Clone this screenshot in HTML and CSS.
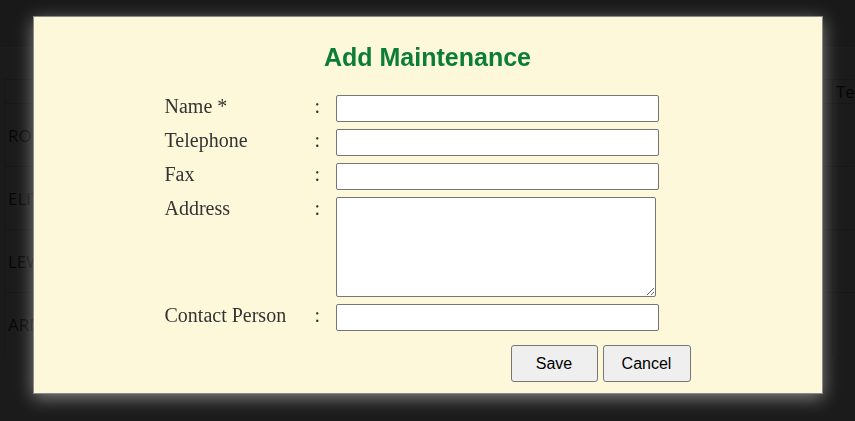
FILE: index.html
```html
<!DOCTYPE html>
<html>
<head>
<meta charset="utf-8">
<link rel="stylesheet" href="styles.css">
</head>
<body>
<div class="page">
  <div class="nav"></div>
  <table class="list">
    <thead>
      <tr><th class="c-name"></th><th class="c-addr"></th><th class="c-tel">Telephone</th></tr>
    </thead>
    <tbody>
      <tr><td>ROBERT SUPPLY</td><td></td><td></td></tr>
      <tr><td>ELITE SERVICE</td><td></td><td></td></tr>
      <tr><td>LEWIS TECH</td><td></td><td></td></tr>
      <tr><td>ARMADA</td><td></td><td></td></tr>
    </tbody>
  </table>
</div>

<div class="overlay">
  <div class="modal">
    <h2 class="title">Add Maintenance</h2>
    <div class="form">
      <div class="grid">
        <label class="lbl">Name *</label><span class="colon">:</span><input class="field" type="text">
        <label class="lbl">Telephone</label><span class="colon">:</span><input class="field" type="text">
        <label class="lbl">Fax</label><span class="colon">:</span><input class="field" type="text">
        <label class="lbl">Address</label><span class="colon">:</span><textarea class="area"></textarea>
        <label class="lbl">Contact Person</label><span class="colon">:</span><input class="field" type="text">
      </div>
      <div class="actions">
        <button class="btn btn-save" type="button">Save</button>
        <button class="btn btn-cancel" type="button">Cancel</button>
      </div>
    </div>
  </div>
</div>
</body>
</html>
```

FILE: styles.css
```css
html, body {
  margin: 0;
  padding: 0;
  background: #ffffff;
  overflow: hidden;
}

.page {
  width: 855px;
  height: 421px;
  overflow: hidden;
  font-family: "Open Sans", "Liberation Sans", sans-serif;
  font-size: 17px;
  color: #3a3a3a;
}

.nav {
  height: 45px;
  background: #e6e6e6;
  border-bottom: 1px solid #cccccc;
  margin-bottom: 33px;
}

.list {
  border-collapse: collapse;
  table-layout: fixed;
  margin-left: 4px;
  width: 851px;
}

.list th,
.list td {
  box-sizing: border-box;
  border-top: 1px solid #d6d6d6;
  border-left: 1px solid #d6d6d6;
  text-align: left;
  font-weight: normal;
  padding: 0 3px;
  white-space: nowrap;
  overflow: hidden;
}

.list th {
  height: 24px;
}

.list td {
  height: 63px;
}

.c-name { width: 300px; }
.c-addr { width: 528px; }
.c-tel { width: 23px; }

.overlay {
  position: fixed;
  inset: 0;
  background: rgba(0, 0, 0, 0.893);
  display: flex;
  justify-content: center;
  align-items: flex-start;
  padding-top: 16px;
}

.modal {
  width: 788px;
  background: #fdf8da;
  border: 1px solid #8a8a8a;
  box-shadow: 0 4px 16px rgba(255, 255, 255, 0.45);
  padding: 27px 0 11px;
  box-sizing: content-box;
}

.title {
  margin: 0;
  text-align: center;
  font-family: "Liberation Sans", Arial, sans-serif;
  font-weight: bold;
  font-size: 25px;
  line-height: 26px;
  color: #0b7d38;
}

.form {
  margin: 25px 0 0 131px;
  width: 526px;
}

.grid {
  display: grid;
  grid-template-columns: 150px 21px 323px;
  row-gap: 7px;
  align-items: start;
}

.lbl,
.colon {
  font-family: "Liberation Serif", "Times New Roman", serif;
  font-size: 20px;
  line-height: 23px;
  color: #333333;
}

.field {
  box-sizing: border-box;
  width: 323px;
  height: 27px;
  margin: 0;
  border: 1px solid #767676;
  border-radius: 2px;
  background: #ffffff;
  padding: 1px 2px;
  font-size: 13px;
}

.area {
  box-sizing: border-box;
  width: 320px;
  height: 100px;
  margin: 0;
  border: 1px solid #767676;
  border-radius: 2px;
  background: #ffffff;
  padding: 2px;
  display: block;
}

.actions {
  display: flex;
  justify-content: flex-end;
  gap: 5px;
  margin-top: 14px;
}

.btn {
  box-sizing: border-box;
  height: 37px;
  margin: 0;
  border: 1px solid #767676;
  border-radius: 3px;
  background: #efefef;
  color: #000000;
  font-family: "Liberation Sans", Arial, sans-serif;
  font-size: 16px;
  padding: 0;
}

.btn-save { width: 87px; }
.btn-cancel { width: 88px; }
```
